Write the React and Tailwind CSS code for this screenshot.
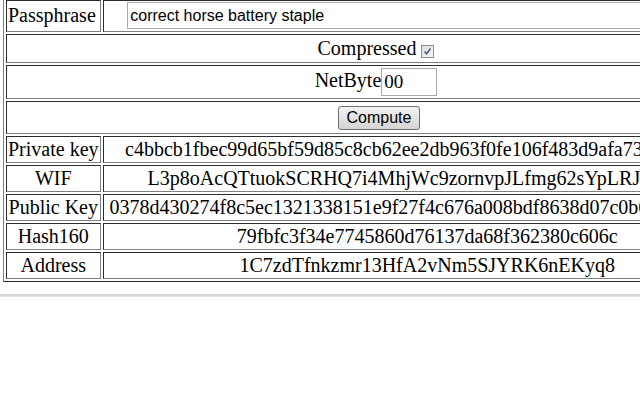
import React from "react";

const rows = [
  ["Private key", "c4bbcb1fbec99d65bf59d85c8cb62ee2db963f0fe106f483d9afa73bd4e39a8a"],
  ["WIF", "L3p8oAcQTtuokSCRHQ7i4MhjWc9zornvpJLfmg62sYpLRJF9woSu"],
  ["Public Key", "0378d430274f8c5ec1321338151e9f27f4c676a008bdf8638d07c0b6be9ab35c71"],
  ["Hash160", "79fbfc3f34e7745860d76137da68f362380c606c"],
  ["Address", "1C7zdTfnkzmr13HfA2vNm5SJYRK6nEKyq8"],
];

const cell =
  "border border-[#808080] [border-style:inset] p-[1px] whitespace-nowrap";

export default function App() {
  return (
    <div className="w-[640px] h-[400px] overflow-hidden bg-white font-['Liberation_Serif',serif] text-[20px] leading-[23px] text-black">
      <div className="pl-[3px]">
        <table className="-mt-[3px] border border-[#808080] [border-style:outset] border-separate border-spacing-[2px]">
          <tbody>
            <tr>
              <td className={`${cell} pb-[2px]`}>Passphrase</td>
              <td className={`${cell} px-[6px] pb-[2px] text-center`}>
                <input
                  type="text"
                  defaultValue="correct horse battery staple"
                  className="w-[600px] h-[27px] border border-[#a9a9a9] px-[2px] font-['Liberation_Sans',Arial,sans-serif] text-[16px] text-black align-middle"
                />
              </td>
            </tr>
            <tr>
              <td colSpan={2} className={`${cell} py-[2px] text-center`}>
                Compressed{" "}
                <span className="inline-flex items-center justify-center w-[13px] h-[13px] mr-[6px] border border-[#8f8f9d] bg-gradient-to-br from-[#dcdcdc] to-[#f7f7f7] align-[-1px]">
                  <svg width="9" height="9" viewBox="0 0 9 9">
                    <path d="M1.5 4.5 L3.5 6.8 L7.5 1.5" fill="none" stroke="#4a5f8f" strokeWidth="1.6" />
                  </svg>
                </span>
              </td>
            </tr>
            <tr>
              <td colSpan={2} className={`${cell} py-[2px] text-center`}>
                NetByte
                <input
                  type="text"
                  defaultValue="00"
                  className="w-[56px] h-[28px] mr-[6px] border border-[#a9a9a9] px-[2px] font-['Liberation_Serif',serif] text-[19px] text-black align-middle"
                />
              </td>
            </tr>
            <tr>
              <td colSpan={2} className={`${cell} text-center h-[33px]`}>
                <button className="w-[82px] h-[24px] rounded-[3px] border border-[#707070] bg-gradient-to-b from-[#f2f2f2] to-[#d4d4d4] font-['Liberation_Sans',Arial,sans-serif] text-[16px] leading-[20px] text-black align-middle">
                  Compute
                </button>
              </td>
            </tr>
            {rows.map(([label, value]) => (
              <tr key={label}>
                <td className={`${cell} text-center`}>{label}</td>
                <td className={`${cell} px-[6px] text-center`}>{value}</td>
              </tr>
            ))}
          </tbody>
        </table>
      </div>
      <div className="mt-[12px] h-[3px] bg-gradient-to-b from-[#c8c8c8] to-[#e8e8e8]" />
    </div>
  );
}
